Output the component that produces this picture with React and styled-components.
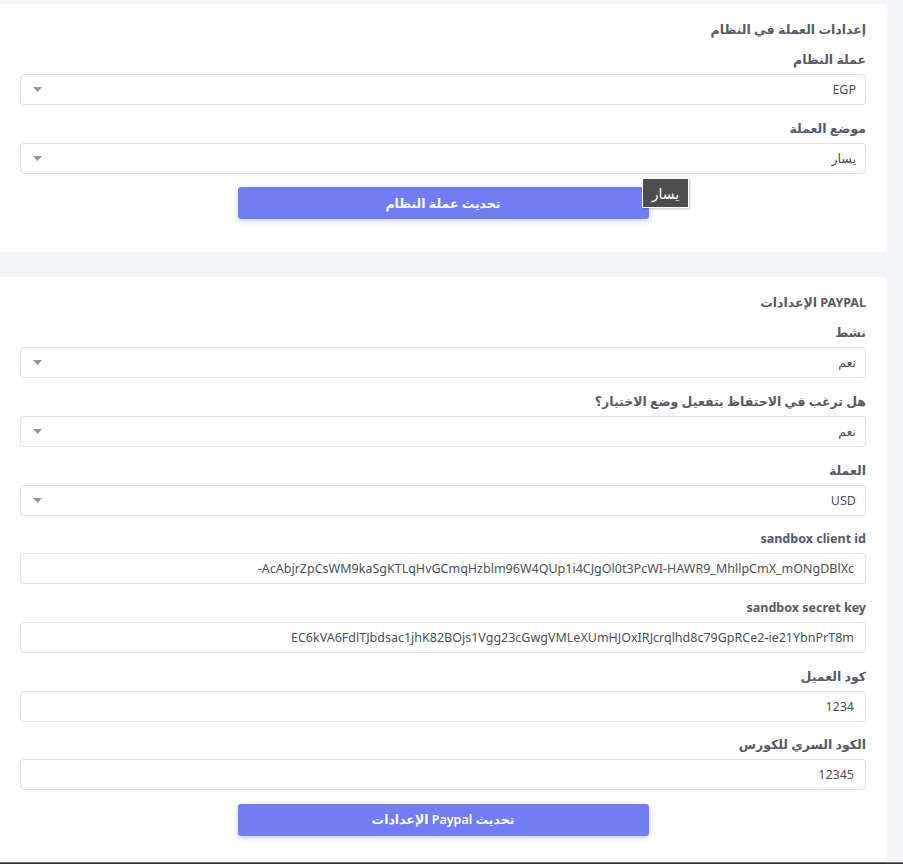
import React from "react";
import styled, { createGlobalStyle } from "styled-components";

const Global = createGlobalStyle`
  html, body { margin: 0; padding: 0; }
  body {
    background: #f3f4f8;
    font-family: "Noto Sans", "DejaVu Sans", sans-serif;
    direction: rtl;
  }
  * { box-sizing: border-box; }
`;

const Page = styled.div`
  padding-top: 4px;
  padding-right: 16px;
  display: flex;
  flex-direction: column;
  gap: 25px;
`;

const Card = styled.section`
  position: relative;
  background: #fff;
  border-radius: 0 4px 4px 0;
  padding: ${(p) => p.$pad || "16px 21px 33px 20px"};
  display: flex;
  flex-direction: column;
`;

const Title = styled.h4`
  margin: 0 0 11px;
  height: 19px;
  font-size: 12.5px;
  line-height: 19px;
  font-weight: 700;
  color: #555a64;
`;

const Group = styled.div`
  display: flex;
  flex-direction: column;
  margin-bottom: 13.67px;
`;

const Label = styled.label`
  display: block;
  height: 19px;
  font-size: 12.5px;
  line-height: 19px;
  font-weight: 700;
  color: #555a64;
  margin-bottom: 5px;
  direction: ${(p) => (p.$ltr ? "ltr" : "rtl")};
  text-align: right;
`;

const SelectBox = styled.div`
  height: 31px;
  border: 1px solid #dfe1e6;
  border-radius: 4px;
  background: #fff;
  display: flex;
  align-items: center;
  justify-content: space-between;
  padding: 0 9px 0 12px;
  font-size: 12.5px;
  color: #4b4f56;
`;

const Caret = styled.svg`
  width: 9px;
  height: 5px;
  fill: #8e979c;
`;

const TextInput = styled.input`
  display: block;
  height: 31px;
  width: 100%;
  margin: 0;
  border: 1px solid #dfe1e6;
  border-radius: 4px;
  background: #fff;
  padding: 0 11px;
  font-family: inherit;
  font-size: 12.5px;
  color: #4b4f56;
  text-align: right;
  direction: ltr;
  outline: none;
`;

const Button = styled.button`
  align-self: center;
  width: 411px;
  height: 32px;
  border: none;
  border-radius: 3px;
  background: #727cf5;
  color: #fff;
  font-family: inherit;
  font-size: 12.5px;
  font-weight: 600;
  box-shadow: 0 2px 6px rgba(114, 124, 245, 0.35);
  cursor: pointer;
`;

const Tooltip = styled.div`
  position: absolute;
  top: 174px;
  right: 198px;
  width: 47px;
  height: 30px;
  background: #4d4d4d;
  border: 1px solid #fff;
  color: #fff;
  font-size: 14px;
  display: flex;
  align-items: center;
  justify-content: center;
  box-shadow: 1px 1px 2px rgba(0, 0, 0, 0.25);
`;

const Footer = styled.footer`
  height: 40px;
  background: #2f2f2f;
  border-top: 1px solid #777;
  margin-top: -24px;
  margin-right: -16px;
`;

const Select = ({ value }) => (
  <SelectBox>
    <span>{value}</span>
    <Caret viewBox="0 0 9 5">
      <path d="M0 0 H9 L4.5 5 Z" />
    </Caret>
  </SelectBox>
);

const Field = ({ label, children, ltr }) => (
  <Group>
    <Label $ltr={ltr}>{label}</Label>
    {children}
  </Group>
);

export default function App() {
  return (
    <>
      <Global />
      <Page>
        <Card>
          <Title>إعدادات العملة في النظام</Title>
          <Field label="عملة النظام">
            <Select value="EGP" />
          </Field>
          <Field label="موضع العملة">
            <Select value="يسار" />
          </Field>
          <Button>تحديث عملة النظام</Button>
          <Tooltip>يسار</Tooltip>
        </Card>
        <Card $pad="16px 21px 25px 20px">
          <Title>PAYPAL الإعدادات</Title>
          <Field label="نشط">
            <Select value="نعم" />
          </Field>
          <Field label="هل ترغب في الاحتفاظ بتفعيل وضع الاختبار؟">
            <Select value="نعم" />
          </Field>
          <Field label="العملة">
            <Select value="USD" />
          </Field>
          <Field label="sandbox client id" ltr>
            <TextInput
              readOnly
              value="-AcAbjrZpCsWM9kaSgKTLqHvGCmqHzblm96W4QUp1i4CJgOl0t3PcWI-HAWR9_MhllpCmX_mONgDBlXc"
            />
          </Field>
          <Field label="sandbox secret key" ltr>
            <TextInput
              readOnly
              value="EC6kVA6FdlTJbdsac1jhK82BOjs1Vgg23cGwgVMLeXUmHJOxIRJcrqlhd8c79GpRCe2-ie21YbnPrT8m"
            />
          </Field>
          <Field label="كود العميل">
            <TextInput readOnly value="1234" />
          </Field>
          <Field label="الكود السري للكورس">
            <TextInput readOnly value="12345" />
          </Field>
          <Button>تحديث Paypal الإعدادات</Button>
        </Card>
        <Footer />
      </Page>
    </>
  );
}
